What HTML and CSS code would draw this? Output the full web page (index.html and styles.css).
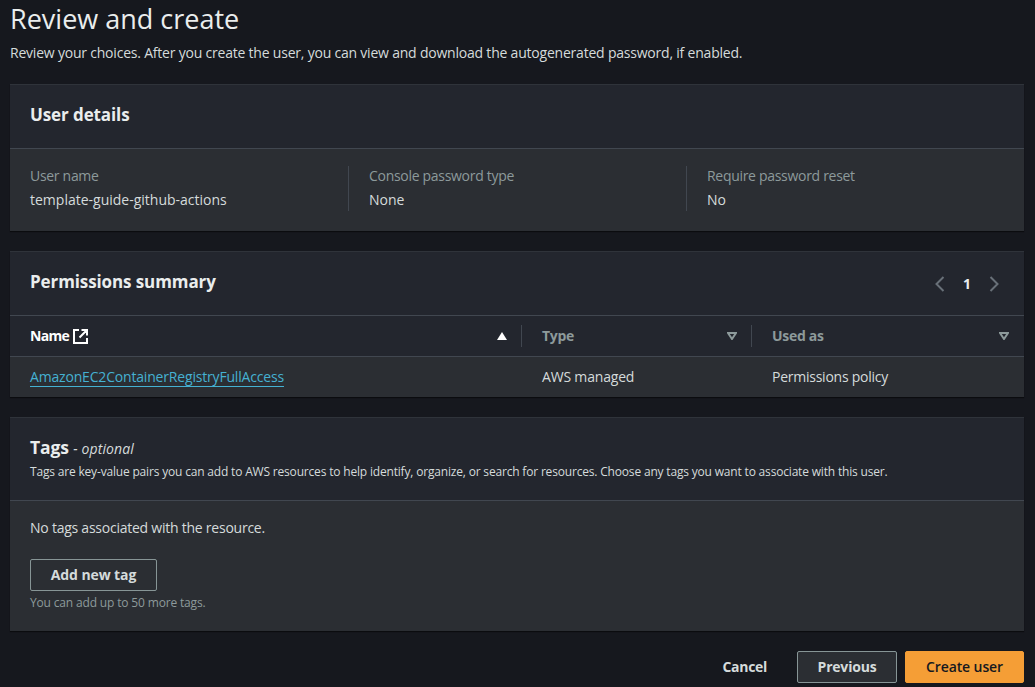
FILE: index.html
```html
<!DOCTYPE html>
<html lang="en">
<head>
<meta charset="utf-8">
<title>Review and create</title>
<link rel="stylesheet" href="styles.css">
</head>
<body>
<main class="page">
  <header class="page-head">
    <h1>Review and create</h1>
    <p>Review your choices. After you create the user, you can view and download the autogenerated password, if enabled.</p>
  </header>

  <section class="card">
    <div class="card-head"><h2>User details</h2></div>
    <div class="details">
      <div class="detail"><div class="label">User name</div><div class="value">template-guide-github-actions</div></div>
      <div class="detail"><div class="label">Console password type</div><div class="value">None</div></div>
      <div class="detail"><div class="label">Require password reset</div><div class="value">No</div></div>
    </div>
  </section>

  <section class="card">
    <div class="card-head perm-head">
      <h2>Permissions summary</h2>
      <div class="pager">
        <svg class="chev" width="10" height="16" viewBox="0 0 10 16"><path d="M8.500 1 1.500 8l7 7"/></svg>
        <span class="page-no">1</span>
        <svg class="chev" width="10" height="16" viewBox="0 0 10 16"><path d="M1.500 1l7 7-7 7"/></svg>
      </div>
    </div>
    <div class="table">
      <div class="th th-name">
        <span class="th-label active">Name</span>
        <svg class="ext" width="15" height="15" viewBox="0 0 15 15"><path d="M6 1H1v13h13V9M8.500 1H14v5.500M14 1 6.500 8.500"/></svg>
        <svg class="sort-up" width="10" height="8" viewBox="0 0 10 8"><path d="M5 0l5 8H0z"/></svg>
      </div>
      <div class="th th-type">
        <span class="th-label">Type</span>
        <svg class="sort-down" width="10" height="8" viewBox="0 0 10 8"><path d="M1 1h8L5 7z"/></svg>
      </div>
      <div class="th th-used">
        <span class="th-label">Used as</span>
        <svg class="sort-down" width="10" height="8" viewBox="0 0 10 8"><path d="M1 1h8L5 7z"/></svg>
      </div>
      <div class="td"><a href="#" class="link">AmazonEC2ContainerRegistryFullAccess</a></div>
      <div class="td td-type">AWS managed</div>
      <div class="td td-used">Permissions policy</div>
    </div>
  </section>

  <section class="card">
    <div class="card-head tags-head">
      <h2>Tags <em>- optional</em></h2>
      <p>Tags are key-value pairs you can add to AWS resources to help identify, organize, or search for resources. Choose any tags you want to associate with this user.</p>
    </div>
    <div class="tags-body">
      <p class="empty">No tags associated with the resource.</p>
      <button class="btn add-tag" type="button">Add new tag</button>
      <p class="hint">You can add up to 50 more tags.</p>
    </div>
  </section>

  <footer class="actions">
    <button class="btn-plain" type="button">Cancel</button>
    <button class="btn previous" type="button">Previous</button>
    <button class="btn primary" type="button">Create user</button>
  </footer>
</main>
</body>
</html>
```

FILE: styles.css
```css
* { box-sizing: border-box; }
html, body { height: 100%; }
body {
  margin: 0;
  background: #16181e;
  color: #d5dbdb;
  font-family: "Open Sans", sans-serif;
  font-size: 14px;
  line-height: 20px;
  overflow: hidden;
}
.page { padding: 0 11px 0 10px; }
h1, h2, p { margin: 0; }
.page-head { height: 84px; padding-top: 1px; }
h1 {
  font-size: 27px;
  line-height: 36px;
  font-weight: 400;
  color: #eaeded;
}
.page-head p { font-size: 14px; line-height: 20px; margin-top: 6px; color: #d5dbdb; letter-spacing: -.21px; }
.card {
  background: #2b2e33;
  margin-bottom: 20px;
  box-shadow: 0 1px 1px rgba(0, 0, 0, .5);
  border-top: 1px solid #2f333a;
}
.card-head {
  background: #23262e;
  border-bottom: 1px solid #414750;
  height: 64px;
  padding: 18px 20px 0;
}
h2 {
  font-size: 17px;
  line-height: 24px;
  font-weight: 700;
  color: #eaeded;
  letter-spacing: -.1px;
}
.details {
  display: grid;
  grid-template-columns: 318px 338px 1fr;
  padding: 17px 20px 20px;
  height: 82px;
}
.detail { padding-left: 20px; border-left: 1px solid #414750; height: 45px; }
.detail:first-child { padding-left: 0; border-left: 0; }
.label { color: #8d9a9b; line-height: 20px; letter-spacing: -.3px; }
.value { color: #d5dbdb; line-height: 20px; margin-top: 4px; }
.perm-head { display: flex; justify-content: space-between; align-items: center; padding-top: 0; padding-bottom: 4px; }
.pager { display: flex; align-items: center; gap: 18px; padding-right: 5px; }
.pager .chev { margin-top: 4px; }
.chev { fill: none; stroke: #687078; stroke-width: 2; }
.page-no { color: #eaeded; font-weight: 700; font-size: 14px; margin-top: 4px; }
.table {
  display: grid;
  grid-template-columns: 511px 230px 1fr;
  grid-template-rows: 41px 40px;
}
.th {
  background: #23262e;
  border-bottom: 1px solid #414750;
  display: flex;
  align-items: center;
  position: relative;
}
.th-name { padding: 0 14px 0 20px; }
.th-type { padding: 0 14px 0 21px; }
.th-used { padding: 0 15px 0 21px; }
.th-type::before, .th-used::before {
  content: "";
  position: absolute;
  left: 0;
  top: 9px;
  height: 22px;
  width: 1px;
  background: #414750;
}
.th-label { font-weight: 700; color: #8d9a9b; letter-spacing: -.3px; }
.th-label.active { color: #fff; letter-spacing: -.7px; }
.ext { fill: none; stroke: #fff; stroke-width: 2; margin-left: 4px; }
.sort-up { fill: #fff; margin-left: auto; }
.sort-down { fill: none; stroke: #8d9a9b; stroke-width: 2; margin-left: auto; }
.td { display: flex; align-items: center; padding-left: 20px; color: #d5dbdb; letter-spacing: -.18px; }
.td-type, .td-used { padding-left: 21px; }
.td-used { letter-spacing: -.25px; }
.link { color: #45b1d2; text-decoration: underline; text-underline-offset: 4px; }
.tags-head { height: 83px; padding-top: 16px; }
.tags-head h2 { line-height: 26px; font-size: 17.5px; }
.tags-head em { font-size: 14px; font-weight: 400; font-style: italic; color: #d5dbdb; letter-spacing: .1px; }
.tags-head p { font-size: 12px; line-height: 16px; color: #d5dbdb; margin-top: 2px; letter-spacing: -.18px; }
.tags-body { padding: 17px 20px 0; height: 130px; }
.empty { line-height: 20px; color: #d5dbdb; letter-spacing: -.24px; }
.btn, .btn-plain {
  font-family: inherit;
  font-size: 14px;
  font-weight: 700;
  line-height: 20px;
  height: 32px;
  border-radius: 2px;
  cursor: pointer;
}
.btn { background: #2b2e33; border: 1px solid #879596; color: #d5dbdb; }
.add-tag { width: 127px; margin-top: 21px; display: block; letter-spacing: -.1px; }
.hint { font-size: 12px; line-height: 16px; color: #8d9a9b; margin-top: 4px; letter-spacing: -.16px; }
.actions { display: flex; justify-content: flex-end; align-items: center; gap: 20px; margin-top: 0; }
.btn-plain { background: none; border: 0; color: #d5dbdb; padding: 0 10px; letter-spacing: -.3px; }
.previous { width: 100px; letter-spacing: -.2px; }
.primary { width: 119px; margin-left: -12px; background: #f59e36; border-color: #f59e36; color: #16191f; font-weight: 600; letter-spacing: -.1px; }
```
